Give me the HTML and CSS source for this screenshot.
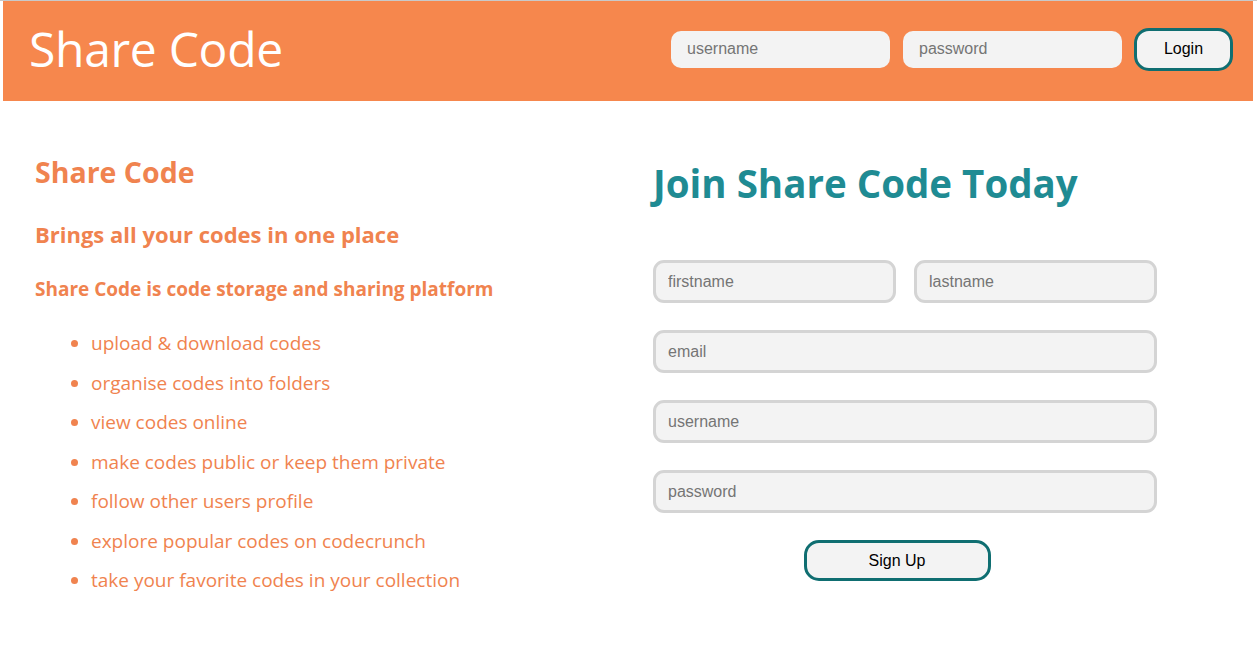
FILE: index.html
```html
<!DOCTYPE html>
<html lang="en">
<head>
<meta charset="utf-8">
<title>Share Code</title>
<link rel="stylesheet" href="styles.css">
</head>
<body>
<header class="topbar">
  <div class="brand">Share Code</div>
  <form class="login">
    <input class="login-input" type="text" placeholder="username">
    <input class="login-input" type="password" placeholder="password">
    <button class="btn btn-login" type="button">Login</button>
  </form>
</header>
<main class="content">
  <section class="intro">
    <h2 class="intro-title">Share Code</h2>
    <h3 class="intro-sub">Brings all your codes in one place</h3>
    <h4 class="intro-desc">Share Code is code storage and sharing platform</h4>
    <ul class="features">
      <li>upload &amp; download codes</li>
      <li>organise codes into folders</li>
      <li>view codes online</li>
      <li>make codes public or keep them private</li>
      <li>follow other users profile</li>
      <li>explore popular codes on codecrunch</li>
      <li>take your favorite codes in your collection</li>
    </ul>
  </section>
  <section class="signup">
    <h1 class="signup-title">Join Share Code Today</h1>
    <form class="signup-form">
      <div class="row-2">
        <input class="field" type="text" placeholder="firstname">
        <input class="field" type="text" placeholder="lastname">
      </div>
      <input class="field" type="email" placeholder="email">
      <input class="field" type="text" placeholder="username">
      <input class="field" type="password" placeholder="password">
      <div class="actions">
        <button class="btn btn-signup" type="button">Sign Up</button>
      </div>
    </form>
  </section>
</main>
</body>
</html>
```

FILE: styles.css
```css
html, body {
  margin: 0;
  padding: 0;
  background: #ffffff;
}
body {
  border-top: 1px solid #c9c9c9;
  font-family: "Open Sans", "Noto Sans", sans-serif;
}
.topbar {
  margin: 0 4px 0 3px;
  height: 100px;
  background: #f6874d;
  display: flex;
  align-items: center;
  justify-content: space-between;
  padding: 0 20px 0 26px;
  box-sizing: border-box;
}
.brand {
  color: #ffffff;
  font-size: 48px;
  font-weight: 400;
  letter-spacing: -0.3px;
  line-height: 1;
  margin-top: -4px;
}
.login {
  display: flex;
  align-items: center;
  gap: 12px;
  margin-top: -4px;
}
.login-input {
  width: 219px;
  height: 37px;
  box-sizing: border-box;
  border: none;
  border-radius: 10px;
  background: #f3f3f3;
  padding: 0 16px;
  font-family: "Liberation Sans", Arial, sans-serif;
  font-size: 16px;
  outline: none;
}
.login-input + .login-input {
  margin-left: 1px;
}
input::placeholder {
  color: #757575;
}
.btn {
  background: #f3f3f3;
  border: 3px solid #0f6e71;
  border-radius: 15px;
  font-family: "Liberation Sans", Arial, sans-serif;
  font-size: 16px;
  color: #000;
  box-sizing: border-box;
  cursor: pointer;
}
.btn-login {
  width: 99px;
  height: 43px;
}
.content {
  display: grid;
  grid-template-columns: 618px 1fr;
  padding: 0 0 0 35px;
}
.intro {
  color: #f0834f;
  padding-top: 53px;
}
.intro-title {
  margin: 0;
  font-size: 28.5px;
  font-weight: 700;
  line-height: 36px;
}
.intro-sub {
  margin: 29px 0 0;
  font-size: 22px;
  font-weight: 700;
  line-height: 30px;
}
.intro-desc {
  margin: 27px 0 0;
  font-size: 19px;
  font-weight: 700;
  line-height: 26px;
}
.features {
  margin: 22px 0 0;
  padding-left: 56px;
  list-style: disc;
}
.features li {
  font-size: 19px;
  font-weight: 400;
  line-height: 39.5px;
}
.signup {
  padding-top: 56px;
}
.signup-title {
  margin: 0;
  color: #1f8b93;
  font-size: 38.5px;
  font-weight: 700;
  line-height: 52px;
}
.signup-form {
  margin-top: 51px;
  width: 504px;
  display: flex;
  flex-direction: column;
  gap: 27px;
}
.row-2 {
  display: flex;
  gap: 18px;
}
.row-2 .field { flex: 1; min-width: 0; }
.field {
  height: 43px;
  box-sizing: border-box;
  border: 3px solid #d4d4d4;
  border-radius: 11px;
  background: #f3f3f3;
  padding: 0 12px;
  font-family: "Liberation Sans", Arial, sans-serif;
  font-size: 16px;
  outline: none;
}
.actions {
  display: flex;
  justify-content: center;
  padding-right: 16px;
}
.btn-signup {
  width: 187px;
  height: 41px;
}
```
